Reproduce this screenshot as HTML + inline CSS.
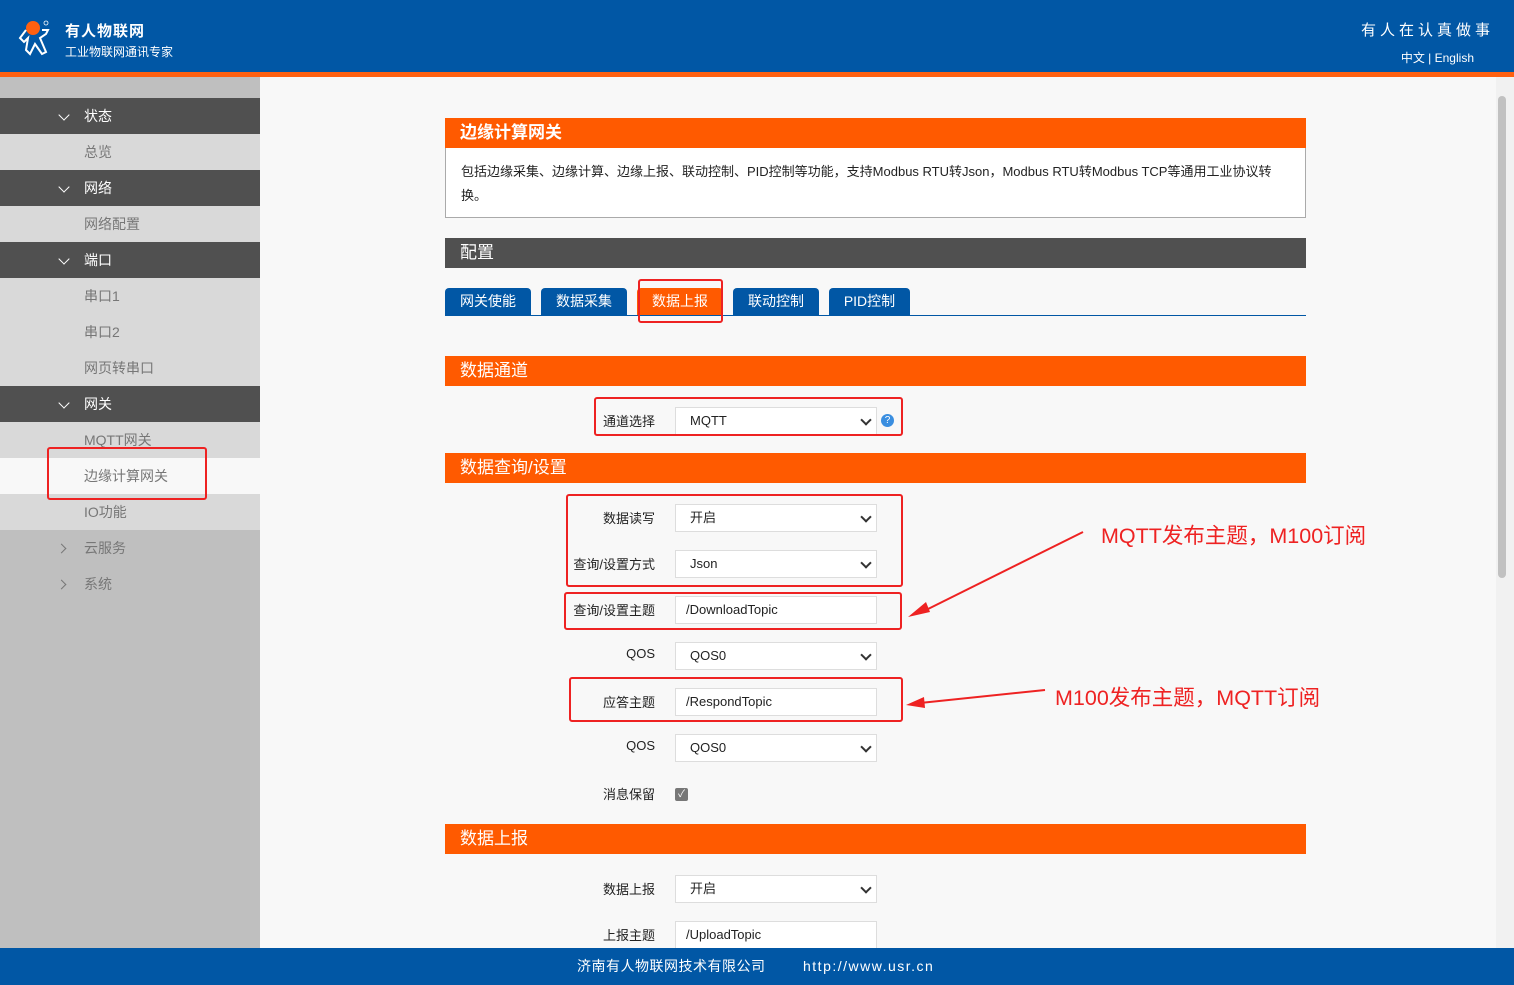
<!DOCTYPE html><html><head><meta charset="utf-8"><style>
*{box-sizing:border-box;margin:0;padding:0}
body{width:1514px;height:985px;overflow:hidden;position:relative;background:#f8f8f8;font-family:"Liberation Sans","Noto Sans CJK SC",sans-serif;font-size:13px;color:#222}
.a{position:absolute}
#hd{left:0;top:0;width:1514px;height:72px;background:#0157a5;color:#fff}
#ob{left:0;top:72px;width:1514px;height:5px;background:#ff6010}
#sb{left:0;top:77px;width:260px;height:871px;background:#bfbfbf}
.it{position:absolute;left:0;width:260px;height:36px;line-height:36px;font-size:14px;padding-left:84px}
.dk{background:#505050;color:#fff}
.lt{background:#d9d9d9;color:#777}
.sel{background:#f8f8f8;color:#777}
.gr{color:#777}
.chev{position:absolute;left:60px;top:13px;width:8px;height:8px;border-right:1.5px solid #fff;border-bottom:1.5px solid #fff;transform:rotate(45deg)}
.chr{position:absolute;left:58px;top:15px;width:7px;height:7px;border-right:1.5px solid #777;border-bottom:1.5px solid #777;transform:rotate(-45deg)}
.bar{position:absolute;left:445px;width:861px;height:30px;line-height:30px;background:#ff5a00;color:#fff;font-size:16px;padding-left:15px}
.tab{position:absolute;top:288px;height:27px;line-height:27px;background:#0157a5;color:#fff;font-size:14px;text-align:center;border-radius:4px 4px 0 0}
.lb{position:absolute;width:200px;left:455px;text-align:right;font-size:13px;color:#222}
.in{position:absolute;left:675px;width:202px;height:28px;background:#fff;border:1px solid #ddd;line-height:26px;padding-left:14px;font-size:13px}
.in.t{padding-left:10px}
.in.s::after{content:"";position:absolute;right:6px;top:8px;width:6px;height:6px;border-right:2px solid #333;border-bottom:2px solid #333;transform:rotate(45deg)}
.rb{position:absolute;border:2px solid #ee2222;border-radius:3px}
#ft{left:0;top:948px;width:1514px;height:37px;background:#0157a5;color:#fff;font-size:14px;line-height:37px}
</style></head><body>
<div id="hd" class="a">
<svg class="a" style="left:16px;top:18px" width="40" height="40" viewBox="0 0 40 40"><circle cx="17" cy="10" r="7" fill="#ff6010"/><path d="M10 12 L4 20 L8 24 L12 20 L10 32 L14 36 L19 26 L26 36 L30 34 L24 20 L30 16 L32 12 L26 12" fill="none" stroke="#fff" stroke-width="2"/><circle cx="30" cy="5" r="2" fill="none" stroke="#fff" stroke-width="0.8"/></svg>
<div class="a" style="left:65px;top:20px;font-size:15px;font-weight:bold;letter-spacing:1px">有人物联网</div>
<div class="a" style="left:65px;top:43px;font-size:12px">工业物联网通讯专家</div>
<div class="a" style="right:20px;top:19px;font-size:15px;letter-spacing:4px">有人在认真做事</div>
<div class="a" style="right:40px;top:49px;font-size:12px">中文 | English</div>
</div>
<div id="ob" class="a"></div>
<div id="sb" class="a"></div>
<div class="it dk" style="top:98px"><span class="chev"></span>状态</div>
<div class="it lt" style="top:134px">总览</div>
<div class="it dk" style="top:170px"><span class="chev"></span>网络</div>
<div class="it lt" style="top:206px">网络配置</div>
<div class="it dk" style="top:242px"><span class="chev"></span>端口</div>
<div class="it lt" style="top:278px">串口1</div>
<div class="it lt" style="top:314px">串口2</div>
<div class="it lt" style="top:350px">网页转串口</div>
<div class="it dk" style="top:386px"><span class="chev"></span>网关</div>
<div class="it lt" style="top:422px">MQTT网关</div>
<div class="it sel" style="top:458px">边缘计算网关</div>
<div class="it lt" style="top:494px">IO功能</div>
<div class="it gr" style="top:530px"><span class="chr"></span>云服务</div>
<div class="it gr" style="top:566px"><span class="chr"></span>系统</div>
<div class="rb" style="left:47px;top:447px;width:160px;height:53px"></div>

<div class="a" style="left:1496px;top:77px;width:18px;height:871px;background:#f1f1f1"></div>
<div class="a" style="left:1498px;top:96px;width:8px;height:482px;background:#c1c1c1;border-radius:4px"></div>

<div class="bar" style="top:118px;font-weight:bold;font-size:17px">边缘计算网关</div>
<div class="a" style="left:445px;top:148px;width:861px;height:70px;background:#fff;border:1px solid #aaa;border-top:none;padding:12px 15px;font-size:13px;line-height:24px">包括边缘采集、边缘计算、边缘上报、联动控制、PID控制等功能，支持Modbus RTU转Json，Modbus RTU转Modbus TCP等通用工业协议转换。</div>
<div class="bar" style="top:238px;background:#505050;font-size:17px">配置</div>
<div class="tab" style="left:445px;width:86px">网关使能</div>
<div class="tab" style="left:541px;width:86px">数据采集</div>
<div class="tab" style="left:637px;width:86px;background:#ff5a00">数据上报</div>
<div class="tab" style="left:733px;width:86px">联动控制</div>
<div class="tab" style="left:829px;width:81px">PID控制</div>
<div class="a" style="left:445px;top:315px;width:861px;height:1px;background:#0157a5"></div>
<div class="rb" style="left:638px;top:279px;width:85px;height:44px"></div>

<div class="bar" style="top:356px;font-size:17px">数据通道</div>
<div class="lb" style="top:411px">通道选择</div>
<div class="in s" style="top:407px">MQTT</div>
<div class="a" style="left:881px;top:414px;width:13px;height:13px;border-radius:50%;background:#3a8ee0;color:#fff;font-size:10px;line-height:13px;text-align:center">?</div>
<div class="rb" style="left:594px;top:397px;width:309px;height:39px"></div>

<div class="bar" style="top:453px;font-size:17px">数据查询/设置</div>
<div class="lb" style="top:508px">数据读写</div><div class="in s" style="top:504px">开启</div>
<div class="lb" style="top:554px">查询/设置方式</div><div class="in s" style="top:550px">Json</div>
<div class="lb" style="top:600px">查询/设置主题</div><div class="in t" style="top:596px">/DownloadTopic</div>
<div class="lb" style="top:646px">QOS</div><div class="in s" style="top:642px">QOS0</div>
<div class="lb" style="top:692px">应答主题</div><div class="in t" style="top:688px">/RespondTopic</div>
<div class="lb" style="top:738px">QOS</div><div class="in s" style="top:734px">QOS0</div>
<div class="lb" style="top:784px">消息保留</div>
<div class="a" style="left:675px;top:788px;width:13px;height:13px;background:#777;border-radius:2px;color:#fff;font-size:10px;line-height:13px;text-align:center">✓</div>
<div class="rb" style="left:566px;top:494px;width:337px;height:93px"></div>
<div class="rb" style="left:564px;top:592px;width:338px;height:38px"></div>
<div class="rb" style="left:569px;top:677px;width:334px;height:45px"></div>

<svg class="a" style="left:900px;top:520px" width="200" height="200" viewBox="0 0 200 200">
<line x1="183" y1="12" x2="20" y2="93" stroke="#ee2222" stroke-width="2"/><polygon points="8,97 26,82 30,92" fill="#ee2222"/>
<line x1="145" y1="170" x2="20" y2="183" stroke="#ee2222" stroke-width="2"/><polygon points="6,185 24,177 25,188" fill="#ee2222"/>
</svg>
<div class="a" style="left:1101px;top:519px;font-size:21.5px;color:#ee2222">MQTT发布主题，M100订阅</div>
<div class="a" style="left:1055px;top:681px;font-size:21.5px;color:#ee2222">M100发布主题，MQTT订阅</div>

<div class="bar" style="top:824px;font-size:17px">数据上报</div>
<div class="lb" style="top:879px">数据上报</div><div class="in s" style="top:875px">开启</div>
<div class="lb" style="top:925px">上报主题</div><div class="in t" style="top:921px">/UploadTopic</div>

<div id="ft" class="a"><span class="a" style="left:577px;letter-spacing:0.5px">济南有人物联网技术有限公司</span><span class="a" style="left:803px;letter-spacing:1.5px">http://www.usr.cn</span></div>
</body></html>
